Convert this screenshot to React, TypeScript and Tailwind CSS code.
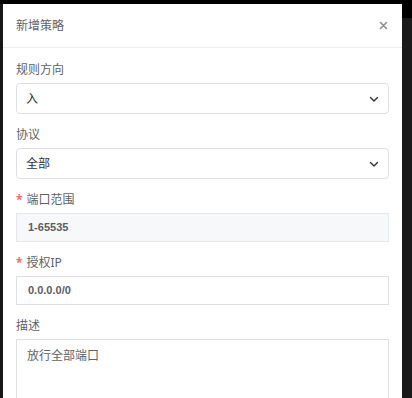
import React from "react";

const font = { fontFamily: '"Noto Sans", "Noto Sans CJK SC", sans-serif' };
const mono = { fontFamily: '"Liberation Sans", "Noto Sans CJK SC", sans-serif' };

function Chevron() {
  return (
    <svg width="12" height="12" viewBox="0 0 12 12" fill="none">
      <path d="M2.5 4.5 L6 8 L9.5 4.5" stroke="#303133" strokeWidth="1.4" strokeLinecap="round" strokeLinejoin="round" />
    </svg>
  );
}

function Label({ text, required }: { text: string; required?: boolean }) {
  return (
    <div className="h-[16px] leading-[16px] text-[12px] text-[#606266] flex items-center">
      {required && <span className="text-[#f56c6c] text-[12px] mr-[4px] font-bold">*</span>}
      <span>{text}</span>
    </div>
  );
}

function Select({ value }: { value: string }) {
  return (
    <div className="mt-[5px] h-[31px] border border-[#dcdfe6] rounded-[4px] flex items-center justify-between pl-[9px] pr-[8px] text-[12px] text-[#303133]">
      <span>{value}</span>
      <Chevron />
    </div>
  );
}

function Input({ value, disabled }: { value: string; disabled?: boolean }) {
  return (
    <div
      className={
        "mt-[5px] h-[29px] border flex items-center px-[11px] text-[11px] font-bold text-[#5a5e66] " +
        (disabled ? "bg-[#f7f8fa] border-[#e4e7ed]" : "bg-white border-[#dcdfe6]")
      }
      style={mono}
    >
      <span>{value}</span>
    </div>
  );
}

export default function App() {
  return (
    <div className="w-[412px] h-[398px] bg-black flex flex-col overflow-hidden" style={font}>
      <div className="h-[4px] bg-black shrink-0" />
      <div className="flex flex-1 min-h-0">
        <div className="w-[3px] bg-[#161616] shrink-0" />
        <div className="w-[399px] bg-white flex flex-col shrink-0">
          <div className="h-[44px] flex items-center justify-between px-[13px] border-b border-[#ebeef5] shrink-0">
            <span className="text-[12px] text-[#5f636b]">新增策略</span>
            <svg width="9" height="9" viewBox="0 0 9 9" className="mr-[1px]">
              <path d="M1.5 1.5 L7.5 7.5 M7.5 1.5 L1.5 7.5" stroke="#8c8f96" strokeWidth="1.6" strokeLinecap="round" />
            </svg>
          </div>
          <div className="px-[13px] pt-[14px] flex flex-col">
            <Label text="规则方向" />
            <Select value="入" />
            <div className="mt-[13px]">
              <Label text="协议" />
              <Select value="全部" />
            </div>
            <div className="mt-[13px]">
              <Label text="端口范围" required />
              <Input value="1-65535" disabled />
            </div>
            <div className="mt-[13px]">
              <Label text="授权IP" required />
              <Input value="0.0.0.0/0" />
            </div>
            <div className="mt-[13px]">
              <Label text="描述" />
              <div className="mt-[5px] h-[80px] border border-[#dcdfe6] px-[10px] pt-[7px] text-[12px] text-[#606266]">
                放行全部端口
              </div>
            </div>
          </div>
        </div>
        <div className="w-[10px] flex flex-col shrink-0">
          <div className="h-[14px] bg-black" />
          <div className="flex-1 bg-[#1a1a1a]" />
        </div>
      </div>
    </div>
  );
}
